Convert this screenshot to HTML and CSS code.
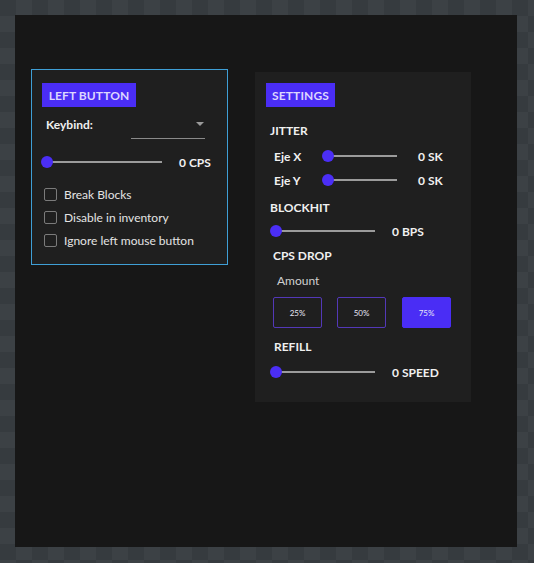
FILE: index.html
```html
<!DOCTYPE html>
<html>
<head>
<meta charset="utf-8">
<link rel="stylesheet" href="styles.css">
</head>
<body>
<div class="frame">
  <section class="card card-left">
    <div class="badge badge-left">LEFT BUTTON</div>
    <div class="keybind-row">
      <span class="label-strong">Keybind:</span>
      <div class="dropdown"><span class="caret"></span></div>
    </div>
    <div class="slider-row slider-cps">
      <div class="slider"><span class="thumb"></span><span class="track"></span></div>
      <span class="value">0 CPS</span>
    </div>
    <ul class="checks">
      <li><span class="box"></span>Break Blocks</li>
      <li><span class="box"></span>Disable in inventory</li>
      <li><span class="box"></span>Ignore left mouse button</li>
    </ul>
  </section>

  <section class="card card-right">
    <div class="badge badge-right">SETTINGS</div>
    <div class="heading h-jitter">JITTER</div>
    <div class="axis-row ax-x">
      <span class="axis-label">Eje X</span>
      <div class="slider s-axis"><span class="thumb"></span><span class="track"></span></div>
      <span class="value">0 SK</span>
    </div>
    <div class="axis-row ax-y">
      <span class="axis-label">Eje Y</span>
      <div class="slider s-axis"><span class="thumb"></span><span class="track"></span></div>
      <span class="value">0 SK</span>
    </div>
    <div class="heading h-block">BLOCKHIT</div>
    <div class="slider-row s-bps">
      <div class="slider s-wide"><span class="thumb"></span><span class="track"></span></div>
      <span class="value">0 BPS</span>
    </div>
    <div class="heading h-drop">CPS DROP</div>
    <div class="amount">Amount</div>
    <div class="pct-row">
      <button class="pct">25%</button>
      <button class="pct">50%</button>
      <button class="pct active">75%</button>
    </div>
    <div class="heading h-refill">REFILL</div>
    <div class="slider-row s-speed">
      <div class="slider s-wide"><span class="thumb"></span><span class="track"></span></div>
      <span class="value">0 SPEED</span>
    </div>
  </section>
</div>
</body>
</html>
```

FILE: styles.css
```css
* { box-sizing: border-box; }
html, body { margin: 0; padding: 0; }
body {
  width: 534px;
  height: 563px;
  padding: 15px 17px 16px 15px;
  background-color: #363b3f;
  background-image:
    linear-gradient(45deg, #3c4145 25%, transparent 25%, transparent 75%, #3c4145 75%),
    linear-gradient(45deg, #3c4145 25%, transparent 25%, transparent 75%, #3c4145 75%);
  background-size: 32px 32px;
  background-position: 0 0, 16px 16px;
  font-family: "Lato", "Open Sans", sans-serif;
  color: #f2f2f2;
  overflow: hidden;
}
.frame {
  width: 502px;
  height: 532px;
  background: #171717;
  display: flex;
  align-items: flex-start;
  padding: 54px 0 0 16px;
  gap: 27px;
}
.card { background: #1f1f1f; display: flex; flex-direction: column; }
.card-left {
  width: 197px;
  height: 196px;
  border: 1px solid #3f9fd6;
  padding: 13px 0 0 10px;
}
.card-right {
  width: 216px;
  height: 330px;
  margin-top: 3px;
  padding: 11px 0 0 11px;
}
.badge {
  height: 24px;
  background: #4a2df5;
  color: #ddd6ff;
  font-size: 12px;
  font-weight: 700;
  display: flex;
  align-items: center;
  justify-content: center;
  letter-spacing: 0.1px;
}
.badge-left { width: 94px; }
.badge-right { width: 69px; }

.label-strong, .heading, .axis-label, .value {
  font-size: 12px;
  font-weight: 700;
  color: #f0f0f0;
}
.keybind-row {
  display: flex;
  align-items: flex-start;
  height: 27px;
  margin-top: 5px;
  padding-left: 4px;
}
.keybind-row .label-strong { line-height: 26px; width: 85px; }
.dropdown {
  width: 74px;
  height: 27px;
  border-bottom: 1px solid #8a8a8a;
  position: relative;
}
.caret {
  position: absolute;
  right: 1px;
  top: 10px;
  width: 0; height: 0;
  border-left: 4px solid transparent;
  border-right: 4px solid transparent;
  border-top: 4px solid #9a9a9a;
}

.slider-row, .axis-row {
  display: flex;
  align-items: center;
  height: 16px;
}
.slider {
  position: relative;
  height: 12px;
  display: flex;
  align-items: center;
}
.thumb {
  position: absolute;
  left: 0;
  top: 0;
  width: 12px;
  height: 12px;
  border-radius: 50%;
  background: #4b2ef6;
}
.track {
  margin-left: 6px;
  flex: 1;
  height: 2px;
  background: #9b9b9b;
}
.slider-cps { margin-top: 15px; margin-left: -1px; }
.slider-cps .slider { width: 121px; }
.slider-cps .value { margin-left: 15px; }

.checks { list-style: none; margin: 13px 0 0 2px; padding: 0; }
.checks li {
  height: 23px;
  display: flex;
  align-items: center;
  font-size: 12px;
  color: #e4e4e4;
}
.box {
  width: 13px;
  height: 13px;
  border: 1px solid #7b7b7b;
  border-radius: 2px;
  margin-right: 7px;
}

.heading { height: 16px; line-height: 16px; }
.h-jitter { margin-top: 16px; margin-left: 4px; }
.axis-row { padding-left: 8px; }
.ax-x { margin-top: 9px; }
.ax-y { margin-top: 8px; }
.axis-label { width: 48px; }
.s-axis { width: 75px; }
.axis-row .value { margin-left: 21px; }
.h-block { margin-top: 12px; margin-left: 4px; }
.s-bps { margin-top: 7px; padding-left: 4px; }
.s-wide { width: 105px; }
.slider-row .value { margin-left: 17px; }
.h-drop { margin-top: 9px; margin-left: 7px; }
.amount {
  margin-top: 9px;
  margin-left: 11px;
  height: 16px;
  line-height: 16px;
  font-size: 12px;
  color: #d0d0d0;
}
.pct-row { display: flex; gap: 15px; margin-top: 8px; margin-left: 7px; }
.pct {
  width: 49px;
  height: 31px;
  background: transparent;
  border: 1px solid #5338b8;
  border-radius: 2px;
  color: #e8e6f5;
  font-family: inherit;
  font-size: 8px;
  padding: 0;
}
.pct.active { background: #4a2df5; border-color: #4a2df5; margin-left: 1px; }
.h-refill { margin-top: 11px; margin-left: 8px; }
.s-speed { margin-top: 9px; padding-left: 4px; }
```
